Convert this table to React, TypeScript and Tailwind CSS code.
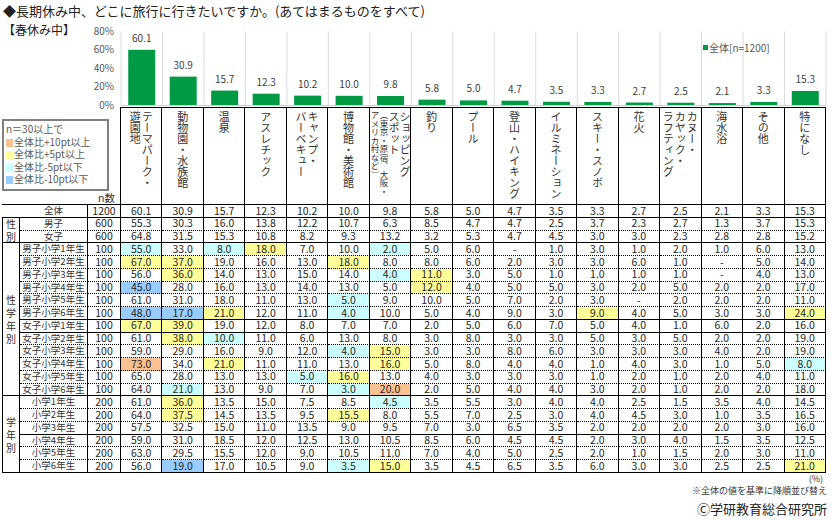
import React from "react";

const GRID = "grid grid-cols-[18px_68px_33px_repeat(17,minmax(0,1fr))] w-[824px] ml-[2px]";

const fills: Record<string, string> = {
  ".": "",
  o: "bg-[#fac192]",
  y: "bg-[#ffff99]",
  c: "bg-[#ccffff]",
  b: "bg-[#99ccff]",
};

const headers: { lines: string[]; small?: string[]; tight?: boolean }[] = [
  { lines: ["テーマパーク・", "遊園地"] },
  { lines: ["動物園・水族館"] },
  { lines: ["温泉"] },
  { lines: ["アスレチック"] },
  { lines: ["キャンプ・", "バーベキュー"] },
  { lines: ["博物館・美術館"] },
  { lines: ["ショッピング", "スポット"], small: ["（東京・原宿、大阪・", "アメリカ村など）"], tight: true },
  { lines: ["釣り"] },
  { lines: ["プール"] },
  { lines: ["登山・ハイキング"] },
  { lines: ["イルミネーション"] },
  { lines: ["スキー・スノボ"] },
  { lines: ["花火"] },
  { lines: ["カヌー・", "カヤック・", "ラフティング"] },
  { lines: ["海水浴"] },
  { lines: ["その他"] },
  { lines: ["特になし"] },
];

// label, n, values, fills
const rows: [string, number, string, string][] = [
  ["全体", 1200, "60.1 30.9 15.7 12.3 10.2 10.0 9.8 5.8 5.0 4.7 3.5 3.3 2.7 2.5 2.1 3.3 15.3", "................."],
  ["男子", 600, "55.3 30.3 16.0 13.8 12.2 10.7 6.3 8.5 4.7 4.7 2.5 3.7 2.3 2.7 1.3 3.7 15.3", "................."],
  ["女子", 600, "64.8 31.5 15.3 10.8 8.2 9.3 13.2 3.2 5.3 4.7 4.5 3.0 3.0 2.3 2.8 2.8 15.2", "................."],
  ["男子小学1年生", 100, "55.0 33.0 8.0 18.0 7.0 10.0 2.0 5.0 6.0 - 1.0 3.0 1.0 2.0 1.0 6.0 13.0", "c.cy..c.........."],
  ["男子小学2年生", 100, "67.0 37.0 19.0 16.0 13.0 18.0 8.0 8.0 6.0 2.0 3.0 3.0 6.0 1.0 - 5.0 14.0", "yy...y..........."],
  ["男子小学3年生", 100, "56.0 36.0 14.0 13.0 15.0 14.0 4.0 11.0 3.0 5.0 1.0 1.0 1.0 1.0 - 4.0 13.0", ".y....cy........."],
  ["男子小学4年生", 100, "45.0 28.0 16.0 13.0 14.0 13.0 5.0 12.0 4.0 5.0 5.0 3.0 2.0 5.0 2.0 2.0 17.0", "b......y........."],
  ["男子小学5年生", 100, "61.0 31.0 18.0 11.0 13.0 5.0 9.0 10.0 5.0 7.0 2.0 3.0 - 2.0 2.0 2.0 11.0", ".....c..........."],
  ["男子小学6年生", 100, "48.0 17.0 21.0 12.0 11.0 4.0 10.0 5.0 4.0 9.0 3.0 9.0 4.0 5.0 3.0 3.0 24.0", "bby..c.....y....y"],
  ["女子小学1年生", 100, "67.0 39.0 19.0 12.0 8.0 7.0 7.0 2.0 5.0 6.0 7.0 5.0 4.0 1.0 6.0 2.0 16.0", "yy..............."],
  ["女子小学2年生", 100, "61.0 38.0 10.0 11.0 6.0 13.0 8.0 3.0 8.0 3.0 3.0 5.0 3.0 5.0 2.0 2.0 19.0", ".yc.............."],
  ["女子小学3年生", 100, "59.0 29.0 16.0 9.0 12.0 4.0 15.0 3.0 3.0 8.0 6.0 3.0 3.0 3.0 4.0 2.0 19.0", ".....cy.........."],
  ["女子小学4年生", 100, "73.0 34.0 21.0 11.0 11.0 13.0 16.0 5.0 8.0 4.0 4.0 1.0 4.0 3.0 1.0 5.0 8.0", "o.y...y.........c"],
  ["女子小学5年生", 100, "65.0 28.0 13.0 13.0 5.0 16.0 13.0 4.0 3.0 3.0 3.0 1.0 2.0 1.0 2.0 4.0 11.0", "....cy..........."],
  ["女子小学6年生", 100, "64.0 21.0 13.0 9.0 7.0 3.0 20.0 2.0 5.0 4.0 4.0 3.0 2.0 1.0 2.0 2.0 18.0", ".c...co.........."],
  ["小学1年生", 200, "61.0 36.0 13.5 15.0 7.5 8.5 4.5 3.5 5.5 3.0 4.0 4.0 2.5 1.5 3.5 4.0 14.5", ".y....c.........."],
  ["小学2年生", 200, "64.0 37.5 14.5 13.5 9.5 15.5 8.0 5.5 7.0 2.5 3.0 4.0 4.5 3.0 1.0 3.5 16.5", ".y...y..........."],
  ["小学3年生", 200, "57.5 32.5 15.0 11.0 13.5 9.0 9.5 7.0 3.0 6.5 3.5 2.0 2.0 2.0 2.0 3.0 16.0", "................."],
  ["小学4年生", 200, "59.0 31.0 18.5 12.0 12.5 13.0 10.5 8.5 6.0 4.5 4.5 2.0 3.0 4.0 1.5 3.5 12.5", "................."],
  ["小学5年生", 200, "63.0 29.5 15.5 12.0 9.0 10.5 11.0 7.0 4.0 5.0 2.5 2.0 1.0 1.5 2.0 3.0 11.0", "................."],
  ["小学6年生", 200, "56.0 19.0 17.0 10.5 9.0 3.5 15.0 3.5 4.5 6.5 3.5 6.0 3.0 3.0 2.5 2.5 21.0", ".b...cy.........y"],
];

const groups: { at: number; cls: string; text: string }[] = [
  { at: 1, cls: "row-span-2", text: "性別" },
  { at: 3, cls: "row-span-12", text: "性学年別" },
  { at: 15, cls: "row-span-6", text: "学年別" },
];

const solidAfter = new Set([0, 2, 8, 9, 14, 17, 20]);

const totals = rows[0][2].split(" ").map(Number);

function Chart() {
  const x0 = 41;
  const cw = 705 / 17;
  const base = 84;
  const top = 10.5;
  const k = (base - top) / 80;
  return (
    <svg width={746} height={86} className="block overflow-visible">
      {[0, 20, 40, 60, 80].map((p) => (
        <text key={p} x={34} y={base - p * k + 3.5} textAnchor="end" fontSize={10} fill="#595959">
          {p}%
        </text>
      ))}
      {Array.from({ length: 18 }, (_, i) => (
        <line key={i} x1={x0 + i * cw} x2={x0 + i * cw} y1={top} y2={base} stroke="#dcdcdc" strokeWidth={1} />
      ))}
      <line x1={x0} x2={x0 + 17 * cw} y1={base + 0.5} y2={base + 0.5} stroke="#d0d0d0" />
      {totals.map((v, i) => {
        const h = v * k;
        const cx = x0 + i * cw + cw / 2;
        return (
          <g key={i}>
            <rect x={cx - 13.5} y={base - h} width={27} height={h} fill="#009a44" />
            <text x={cx} y={base - h - 8} textAnchor="middle" fontSize={10} fill="#404040">
              {v.toFixed(1)}
            </text>
          </g>
        );
      })}
      <rect x={623} y={24} width={5} height={5} fill="#009a44" />
      <text x={629} y={30.5} fontSize={10} fill="#595959">
        全体[n=1200]
      </text>
    </svg>
  );
}

function Swatch({ cls }: { cls: string }) {
  return <span className={`inline-block w-[7px] h-[8px] mr-[1px] align-[-1px] ${cls}`} />;
}

export default function App() {
  return (
    <div className="w-[840px] h-[520px] bg-white overflow-hidden text-[#262626] font-['Noto_Sans_CJK_JP','Noto_Sans',sans-serif]">
      <div className="h-[21px] pl-[3px] text-[13px] leading-[22px] text-[#222]">
        ◆長期休み中、どこに旅行に行きたいですか。(あてはまるものをすべて)
      </div>

      <div className="flex h-[86px]">
        <div className="w-[80px] pl-[3px] text-[12px] leading-[18px] text-[#222]">【春休み中】</div>
        <Chart />
      </div>

      {/* header */}
      <div className={`${GRID} h-[97px]`}>
        <div className="col-span-3 border-r border-black flex flex-col">
          <div className="mt-[12px] w-[107px] h-[72px] border-2 border-[#808080] pt-[2px] pl-[2px] text-[10px] leading-[12.5px] text-[#595959] whitespace-nowrap">
            <div>n＝30以上で</div>
            <div>
              <Swatch cls="bg-[#fac192]" />
              全体比+10pt以上
            </div>
            <div>
              <Swatch cls="bg-[#ffff99]" />
              全体比+5pt以上
            </div>
            <div>
              <Swatch cls="bg-[#ccffff]" />
              全体比-5pt以下
            </div>
            <div>
              <Swatch cls="bg-[#99ccff]" />
              全体比-10pt以下
            </div>
          </div>
          <div className="mt-auto self-end pr-[5px] text-[10.5px] leading-[12px] text-[#333]">n数</div>
        </div>
        {headers.map((h, i) => (
          <div key={i} className="border-t border-r border-black flex flex-row-reverse justify-center items-start pt-[3px] text-[#333]">
            {h.lines.map((l) => (
              <div
                key={l}
                className={`[writing-mode:vertical-rl] text-[11px] ${h.tight ? "leading-[11px]" : "leading-[12px]"}`}
              >
                {l}
              </div>
            ))}
            {h.small?.map((l) => (
              <div key={l} className="[writing-mode:vertical-rl] text-[8.5px] leading-[9px]">
                {l}
              </div>
            ))}
          </div>
        ))}
      </div>

      {/* body */}
      <div className={`${GRID} auto-rows-[12.76px] border-t border-black`}>
        {rows.map(([label, n, vals, fill], i) => {
          const bottom = solidAfter.has(i)
            ? "border-b border-black"
            : "border-b border-black [border-bottom-style:dotted]";
          const g = groups.find((gr) => gr.at === i);
          return (
            <React.Fragment key={label}>
              {i === 0 && <div className="border-b border-black" />}
              {g && (
                <div
                  className={`${g.cls} border-l border-r border-b border-black flex flex-col items-center justify-center text-[10px] leading-[13px] text-[#333]`}
                >
                  {g.text.split("").map((c, j) => (
                    <span key={j}>{c}</span>
                  ))}
                </div>
              )}
              <div className={`${bottom} border-r flex items-center justify-center text-[9.5px] leading-none text-[#333] whitespace-nowrap`}>
                {label}
              </div>
              <div className={`${bottom} border-r flex items-center justify-center text-[10.5px] leading-none`}>{n}</div>
              {vals.split(" ").map((v, j) => (
                <div
                  key={j}
                  className={`${bottom} border-r flex items-center justify-center text-[10.5px] leading-none ${fills[fill[j]]}`}
                >
                  {v}
                </div>
              ))}
            </React.Fragment>
          );
        })}
      </div>

      <div className="w-[827px] flex flex-col items-end text-[#333]">
        <div className="text-[9px] leading-[12px] pr-[4px]">(%)</div>
        <div className="text-[9px] leading-[12px]">※全体の値を基準に降順並び替え</div>
        <div className="mt-[3px] text-[13px] leading-[18px] text-[#222]">Ⓒ学研教育総合研究所</div>
      </div>
    </div>
  );
}
